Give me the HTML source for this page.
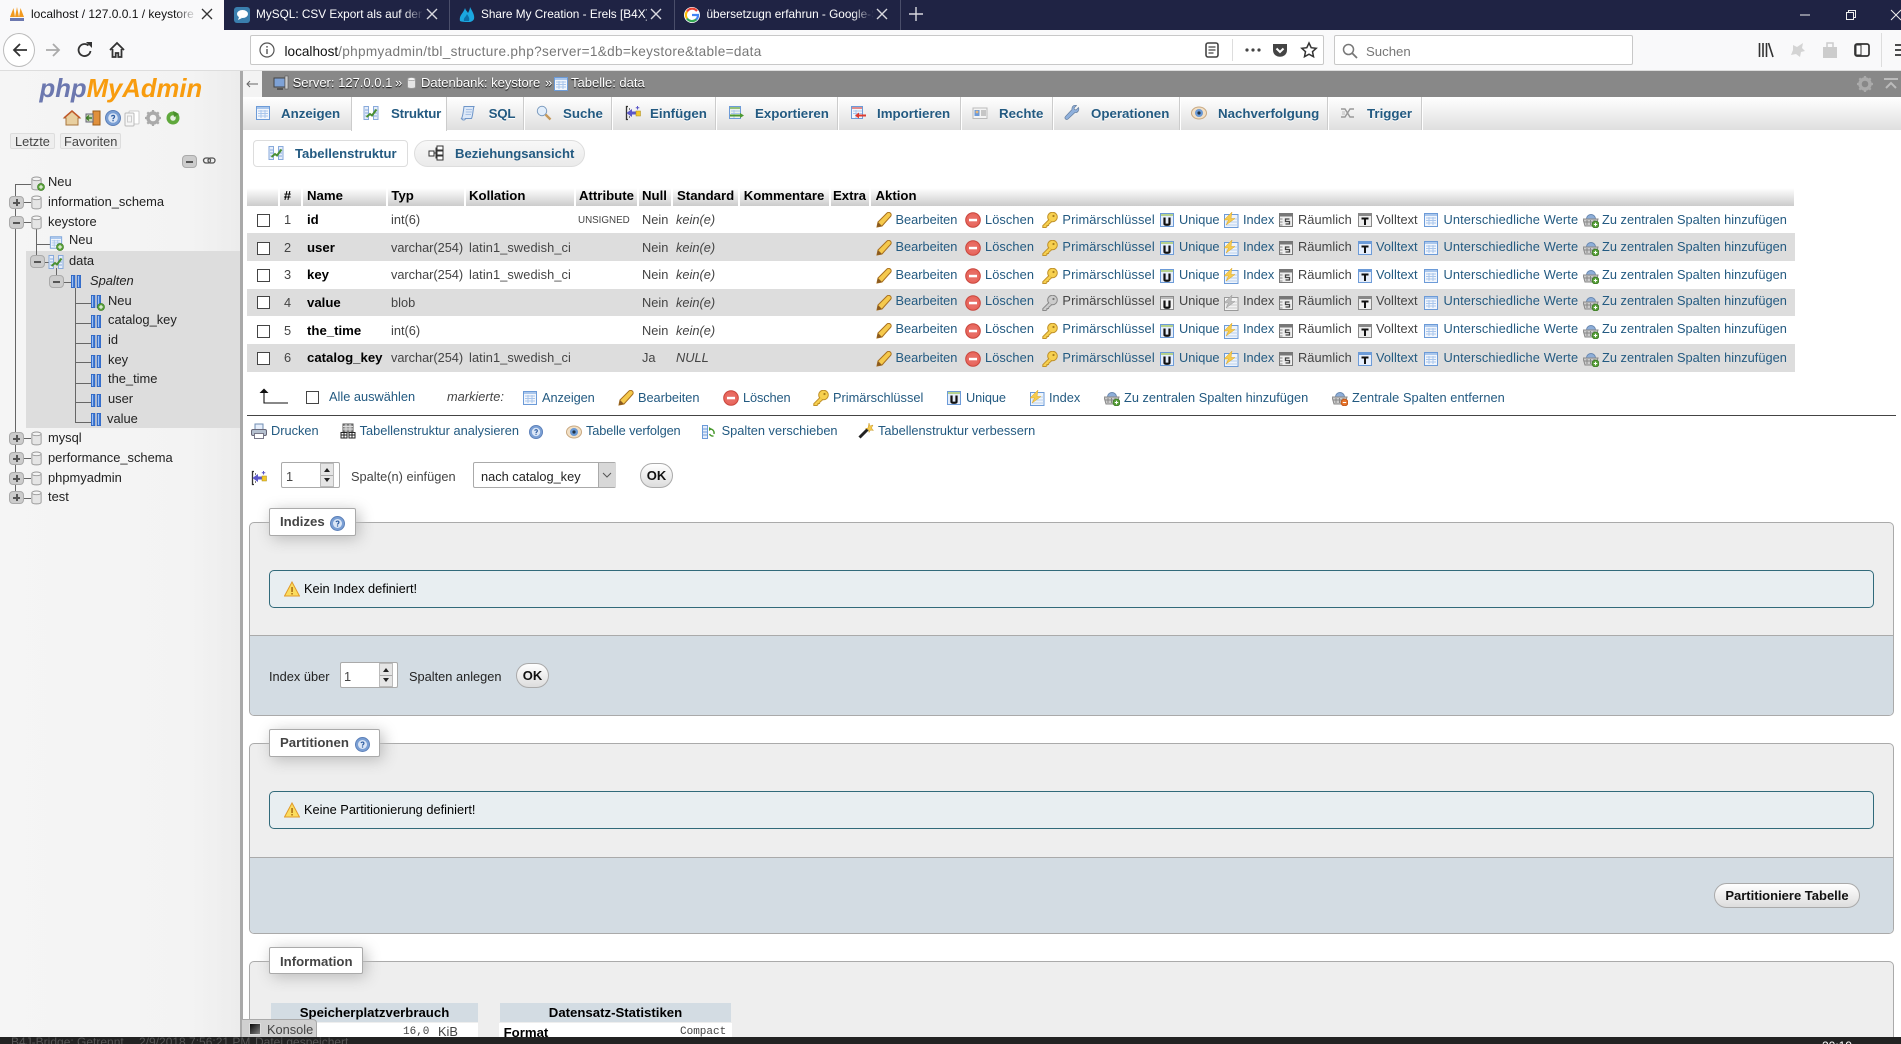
<!DOCTYPE html>
<html lang="de"><head><meta charset="utf-8"><title>phpMyAdmin</title>
<style>
html,body{margin:0;padding:0;width:1901px;height:1044px;overflow:hidden}
body{position:relative;background:#fff;font:12.8px "Liberation Sans",Arial,sans-serif;color:#444}
#pg{position:absolute;left:0;top:0;width:1901px;height:1044px;overflow:hidden}
.a,.t,svg{position:absolute}
.t{white-space:nowrap;line-height:16px}
svg{overflow:visible}
.i{width:16px;height:16px}
.l{color:#235a81}
.r{position:absolute;left:0;height:0;width:0}
.r .t{top:-8px}
.r .i{top:-8px}
.w{color:#fff;font-size:13px;text-shadow:0 1px 1px #000;top:75px}
.tb{font-weight:bold;font-size:13.3px;color:#235a81;top:106px;text-shadow:0 1px 0 #fff}
.sep{position:absolute;top:97px;height:33px;width:1px;background:#fff;box-shadow:-1px 0 0 #ccc}
.th{font-weight:bold;font-size:13.2px;color:#000;top:188px}
.hs{position:absolute;top:188px;height:18px;width:2px;background:#fff}
.n{left:307px;font-weight:bold;font-size:13.2px;color:#000}
.ck{position:absolute;left:257px;top:-6px;width:11px;height:11px;border:1px solid #444;background:#fff}
.b1{left:895.5px}.b2{left:985px;letter-spacing:.1px}.b3{left:1062.4px;letter-spacing:.14px}.b4{left:1179px}.b5{left:1243px}.b6{left:1298px;letter-spacing:.05px}.b7{left:1376px;letter-spacing:.05px}.b8{left:1443.5px;letter-spacing:.12px}.b9{left:1602px;letter-spacing:.02px}
.p1{left:876px}.p2{left:965px}.p3{left:1042px}.p4{left:1159px}.p5{left:1223px}.p6{left:1278px}.p7{left:1357px}.p8{left:1423px}.p9{left:1583px}
.k{left:469px;letter-spacing:.1px}
.tr{font-size:12.9px;color:#222}
.ln{position:absolute;background:#666}
.h{width:1px}.v{height:1px}
.pm{position:absolute;width:13px;height:11px;background:#ccc;border:1px solid #aaa;border-radius:4px}
.pm:before{content:"";position:absolute;left:3px;top:5px;width:7px;height:1px;background:#555;box-shadow:0 1px 0 #555}
.pm.pl:after{content:"";position:absolute;left:6px;top:2px;width:2px;height:7px;background:#555}
.fs{position:absolute;left:249px;width:1645px;background:#eee;border:1px solid #aaa;border-radius:5px;box-sizing:border-box}
.fo{position:absolute;left:250px;width:1643px;background:#d3dce3;border-top:1px solid #aaa;border-radius:0 0 4px 4px;box-sizing:border-box}
.lg{position:absolute;left:269px;background:#fff;border:1px solid #aaa;border-radius:2px;box-shadow:3px 3px 15px #bbb;box-sizing:border-box}
.lt{font-weight:bold;font-size:13.2px;color:#444}
.no{position:absolute;left:269px;width:1605px;height:38px;background:#e8eef1;border:1px solid #316a7a;border-radius:5px;box-sizing:border-box}
.nt{left:304px;color:#000;font-size:12.8px}
.in{position:absolute;background:#fff;border:1px solid #aaa;border-radius:2px;box-sizing:border-box}
.sp{position:absolute;width:14px;height:24px;background:#e5e5e5;border:1px solid #bbb;box-sizing:border-box}
.sp:before{content:"";position:absolute;left:3px;top:4px;border:3px solid transparent;border-bottom:4px solid #222;border-top:0}
.sp:after{content:"";position:absolute;left:3px;bottom:4px;border:3px solid transparent;border-top:4px solid #222;border-bottom:0}
.sp i{position:absolute;left:0;right:0;top:11px;height:1px;background:#aaa}
.btn{position:absolute;border:1px solid #aaa;border-radius:13px;background:linear-gradient(#fff,#ddd);box-sizing:border-box;text-align:center;font-weight:bold;color:#111;font-size:13px;line-height:24px}
.bt{color:#fff;font-size:11.8px;top:6px}
.x{stroke:#d8d8df;stroke-width:1.4;fill:none}
</style></head><body><div id="pg">
<svg width="0" height="0" style="left:0;top:0">
<defs>
<symbol id="pencil" viewBox="0 0 16 16"><path d="M1 15l1-5L11 1c1-.9 2.600-.7 3.500.2.900.9.900 2.300 0 3.300L6 14z" fill="#f5c94c" stroke="#a9701f"/><path d="M1 15l1-5 4 4z" fill="#8a5a20"/></symbol>
<symbol id="del" viewBox="0 0 16 16"><circle cx="8" cy="8" r="7.300" fill="#e8665c" stroke="#c8453c"/><circle cx="8" cy="8" r="5" fill="#e8706a" opacity=".7"/><rect x="4" y="6.800" width="8" height="2.500" fill="#fff"/></symbol>
<symbol id="key" viewBox="0 0 16 16"><circle cx="10.500" cy="5" r="4.800" fill="#f7d04f" stroke="#c0912a"/><path d="M7 7.500L.8 13.700v1.800h3.200l1-1v-1h1.500l.5-1.500 2.500-2" fill="#f7d04f" stroke="#c0912a"/><circle cx="11.500" cy="4" r="1.100" fill="#a97f1e"/></symbol>
<symbol id="keyg" viewBox="0 0 16 16"><circle cx="10.500" cy="5" r="4.800" fill="#ccc" stroke="#888"/><path d="M7 7.500L.8 13.700v1.800h3.200l1-1v-1h1.500l.5-1.500 2.500-2" fill="#ccc" stroke="#888"/><circle cx="11.500" cy="4" r="1.100" fill="#777"/></symbol>
<symbol id="u" viewBox="0 0 16 16"><rect x="1.500" y="1.500" width="13" height="13" fill="#e6eefb" stroke="#6c9bd8"/><rect x="2" y="2" width="12" height="2" fill="#b6d28f"/><path d="M5.500 5.500v6.500c0 1 5 1 5 0V5.500" fill="none" stroke="#111" stroke-width="2.200"/></symbol>
<symbol id="ug" viewBox="0 0 16 16"><rect x="1.500" y="1.500" width="13" height="13" fill="#f2f2f2" stroke="#888"/><rect x="2" y="2" width="12" height="2" fill="#bbb"/><path d="M5.500 5.500v6.500c0 1 5 1 5 0V5.500" fill="none" stroke="#111" stroke-width="2.200"/></symbol>
<symbol id="idx" viewBox="0 0 16 16"><rect x="1.500" y="2.500" width="13.500" height="13" fill="#eef4fb" stroke="#6c9bd8"/><path d="M3 7h12M3 10h12M3 13h12" stroke="#b9d0ee"/><path d="M9 0L1 8h4.500L3 13l9-6.500H8z" fill="#f6cb4c" stroke="#d8a52c" stroke-width=".5"/></symbol>
<symbol id="idxg" viewBox="0 0 16 16"><rect x="1.500" y="2.500" width="13.500" height="13" fill="#f2f2f2" stroke="#999"/><path d="M3 7h12M3 10h12M3 13h12" stroke="#ccc"/><path d="M9 0L1 8h4.500L3 13l9-6.500H8z" fill="#bbb" stroke="#999" stroke-width=".5"/></symbol>
<symbol id="spa" viewBox="0 0 16 16"><rect x="1.500" y="1.500" width="13" height="13" fill="#eee" stroke="#777"/><rect x="2" y="2" width="12" height="2.500" fill="#777"/><path d="M1.500 7h3M1.500 10h3M1.500 13h3" stroke="#888"/><path d="M11.500 7H7.500v2.500h4V12H7.500" fill="none" stroke="#444" stroke-width="1.300"/></symbol>
<symbol id="tt" viewBox="0 0 16 16"><rect x="1.500" y="1.500" width="13" height="13" fill="#eee" stroke="#888"/><rect x="2" y="2" width="12" height="2" fill="#888"/><path d="M4.500 6.500h7M8 6.500V13" stroke="#111" stroke-width="2"/></symbol>
<symbol id="tb" viewBox="0 0 16 16"><rect x="1.500" y="1.500" width="13" height="13" fill="#e6eefb" stroke="#6c9bd8"/><rect x="2" y="2" width="12" height="2" fill="#6c9bd8"/><path d="M4.500 6.500h7M8 6.500V13" stroke="#111" stroke-width="2"/></symbol>
<symbol id="dis" viewBox="0 0 16 16"><rect x="1.500" y="1.500" width="13" height="13" fill="#f2f6fc" stroke="#6c9bd8"/><rect x="2" y="2" width="12" height="2" fill="#a9c6ec"/><path d="M3 6h10M3 8.500h10M3 11h10M6 5v8M10 5v8" stroke="#a9c6ec"/></symbol>
<symbol id="bka" viewBox="0 0 16 16"><path d="M3.500 7a4.500 4.500 0 019 0z" fill="#8eaed8" stroke="#6787b0"/><path d="M0 7h15l-2 7H2z" fill="#ccc" stroke="#888"/><path d="M4 8v5M7.500 8v5M11 8v5M1 10h13" stroke="#888"/><circle cx="12.500" cy="12.500" r="3.400" fill="#5ca33c" stroke="#3d7d26"/><path d="M10.800 12.500h3.400M12.500 10.800v3.400" stroke="#fff"/></symbol>
<symbol id="bkr" viewBox="0 0 16 16"><path d="M3.500 7a4.500 4.500 0 019 0z" fill="#8eaed8" stroke="#6787b0"/><path d="M0 7h15l-2 7H2z" fill="#ccc" stroke="#888"/><path d="M4 8v5M7.500 8v5M11 8v5M1 10h13" stroke="#888"/><circle cx="12.500" cy="12.500" r="3.400" fill="#e8762c" stroke="#c0561a"/><path d="M10.800 12.500h3.400" stroke="#fff"/></symbol>
<symbol id="help" viewBox="0 0 16 16"><circle cx="8" cy="8" r="7.500" fill="#7a9fd4" stroke="#5b7fb8"/><circle cx="8" cy="8" r="4.800" fill="#dbe6f6"/><path d="M6.500 6.500C7 5 9.500 5 9.500 6.800 9.500 8 8 8 8 9.200" fill="none" stroke="#2d5ca0" stroke-width="1.300"/><rect x="7.400" y="10" width="1.300" height="1.300" fill="#2d5ca0"/></symbol>
<symbol id="eye" viewBox="0 0 16 16"><ellipse cx="8" cy="8" rx="7.500" ry="6" fill="#f2e0c6" stroke="#c8a880"/><circle cx="8" cy="8" r="4" fill="#6b9ad6"/><circle cx="8" cy="8" r="1.600" fill="#234"/></symbol>
<symbol id="print" viewBox="0 0 16 16"><rect x="4" y="1" width="8" height="6" fill="#e6eefb" stroke="#6f8cb2"/><rect x="0.500" y="6.500" width="15" height="6" rx="1.500" fill="#b5c0cf" stroke="#667"/><rect x="3.500" y="10.500" width="9" height="5" fill="#fff" stroke="#778"/></symbol>
<symbol id="ana" viewBox="0 0 16 16"><rect x="3" y="1" width="10" height="8" fill="#999" stroke="#555"/><path d="M3 3.500h10M3 6h10M6 1v8M10 1v8" stroke="#ddd"/><rect x="1" y="9.500" width="6" height="5.500" fill="#fff" stroke="#222"/><rect x="9" y="9.500" width="6" height="5.500" fill="#fff" stroke="#222"/><path d="M1 12h6M4 9.500V15M9 12h6M12 9.500V15" stroke="#222"/></symbol>
<symbol id="mov" viewBox="0 0 16 16"><rect x="1.500" y="1.500" width="5" height="13" fill="#e6eefb" stroke="#6c9bd8"/><path d="M2 5h4M2 8h4M2 11h4" stroke="#6c9bd8"/><path d="M9 5a4 4 0 014 5M12.500 12a4 4 0 01-4-2" fill="none" stroke="#4a9a30" stroke-width="1.400"/><path d="M8 3l3 2-3 2z" fill="#4a9a30"/></symbol>
<symbol id="wand" viewBox="0 0 16 16"><path d="M1.500 14.500L9.500 6.500" stroke="#222" stroke-width="3"/><path d="M11 0l1 3 3-1-1.500 3 2 2.500-3-.5-1.500 2.500-.5-3L7.500 5.500 10 5z" fill="#f5c94c" stroke="#c89a2a" stroke-width=".5"/></symbol>
<symbol id="warn" viewBox="0 0 16 16"><path d="M8 1l7.500 14H.5z" fill="#fbdc5e" stroke="#e09a2a"/><rect x="7.300" y="6" width="1.500" height="5" fill="#a86a10"/><rect x="7.300" y="12" width="1.500" height="1.500" fill="#a86a10"/></symbol>
<symbol id="st" viewBox="0 0 16 16"><rect x="1" y="1.500" width="4.500" height="13" fill="#e6eefb" stroke="#88aadb"/><rect x="10.500" y="1.500" width="4.500" height="13" fill="#e6eefb" stroke="#88aadb"/><path d="M2 5h3M2 8h3M2 11h3M11 5h3M11 8h3M11 11h3" stroke="#88aadb"/><path d="M3.500 12l3.500-3 2 1.500 4.500-6" fill="none" stroke="#4a8f32" stroke-width="2"/></symbol>
<symbol id="sql" viewBox="0 0 16 16"><path d="M4 1.500h10c-1 2-1 9-2.500 12H1.500c1.500-2 2-9 2.500-12z" fill="#dce8f8" stroke="#6e95c8"/><path d="M1.500 13.500c1 2 3.500 2 4 0" fill="#fff" stroke="#6e95c8"/><path d="M6 4.500h6M5.800 7h6M5.500 9.500h5.500" stroke="#a6c0e4"/></symbol>
<symbol id="mag" viewBox="0 0 16 16"><circle cx="6" cy="6" r="4.700" fill="#e2eefb" stroke="#7d9cbf"/><path d="M9.500 9.500l5 5" stroke="#c6995a" stroke-width="2.400"/></symbol>
<symbol id="ins" viewBox="0 0 16 16"><path d="M3 1.500H1.500v13H3M4 4h1M4 12h1" fill="none" stroke="#333" stroke-width="1.300"/><path d="M7 4v8L1.500 8z" fill="#5b57c8"/><rect x="7" y="6.500" width="4" height="3" fill="#5b57c8"/><rect x="11" y="6" width="4.500" height="5" fill="#f2c72b" stroke="#a98a1c" stroke-width=".5"/><path d="M12.500 1v3.500M10.800 2.800h3.500" stroke="#5b57c8"/></symbol>
<symbol id="exp" viewBox="0 0 16 16"><rect x="1.500" y="1.500" width="11" height="12" fill="#eaf2ea" stroke="#6c9bd8"/><rect x="2" y="2" width="10" height="2" fill="#93c078"/><path d="M3 6h9M3 8.500h9M6 5v8" stroke="#a9c6ec"/><rect x="2" y="9.500" width="10" height="2" fill="#4d9a30"/><path d="M12 8l4 2.500L12 13z" fill="#4d9a30"/></symbol>
<symbol id="imp" viewBox="0 0 16 16"><rect x="1.500" y="1.500" width="11" height="12" fill="#f2f6fc" stroke="#6c9bd8"/><rect x="2" y="2" width="10" height="2" fill="#e08d8d"/><path d="M3 6h9M3 8.500h9M6 5v8" stroke="#a9c6ec"/><rect x="8" y="9.500" width="8" height="2" fill="#dd3b30"/><path d="M9 7.500l-4 3 4 3z" fill="#dd3b30"/></symbol>
<symbol id="card" viewBox="0 0 16 16"><rect x="1" y="3" width="14" height="10.500" fill="#f4f4f4" stroke="#bbb"/><rect x="2.500" y="5" width="5" height="6" fill="#6d9ad8"/><circle cx="5" cy="7" r="1.400" fill="#e8b87a"/><path d="M9 6h5M9 8h5M9 10h5" stroke="#999"/></symbol>
<symbol id="wr" viewBox="0 0 16 16"><path d="M14.500 2.500l-2.500 2.500-1.500-.5-.5-1.500 2.500-2.500c-2.500-.8-5 1-4.500 4L1.500 11.500c-1.500 1.500.5 4 2.500 2.500L11 7.500c2.800.5 4.500-2.500 3.500-5z" fill="#8fb0dc" stroke="#667f9f" stroke-width=".7"/></symbol>
<symbol id="trg" viewBox="0 0 16 16"><path d="M1 4h4l5 8h4M1 12h4l5-8h4" fill="none" stroke="#999" stroke-width="1.400"/><path d="M2 7h3M2 9h3" stroke="#bbb"/></symbol>
<symbol id="db" viewBox="0 0 14 16"><path d="M2 3v10c0 2.500 10 2.500 10 0V3z" fill="#e5e5e5" stroke="#999"/><ellipse cx="7" cy="3" rx="5" ry="2" fill="#f5f5f5" stroke="#999"/></symbol>
<symbol id="plus" viewBox="0 0 8 8"><circle cx="4" cy="4" r="3.500" fill="#5ca33c" stroke="#3d7d26" stroke-width=".7"/><path d="M2 4h4M4 2v4" stroke="#fff"/></symbol>
<symbol id="col" viewBox="0 0 10 13"><rect x="0" y="0" width="4" height="13" fill="#3f79d6" stroke="#1c4ea8" stroke-width=".5"/><rect x="6" y="0" width="4" height="13" fill="#3f79d6" stroke="#1c4ea8" stroke-width=".5"/><rect x="1" y="1" width="1" height="11" fill="#9dc0f2"/><rect x="7" y="1" width="1" height="11" fill="#9dc0f2"/></symbol>
<symbol id="gear" viewBox="0 0 16 16"><circle cx="8" cy="8" r="5" fill="none" stroke="#aaa" stroke-width="3.400"/><path d="M8 0v3M8 13v3M0 8h3M13 8h3M2.300 2.300l2 2M11.700 11.700l2 2M13.700 2.300l-2 2M4.300 11.700l-2 2" stroke="#aaa" stroke-width="2.200"/></symbol>
</defs></svg>

<!-- Browser tab strip -->
<div class="a" style="left:0;top:0;width:1901px;height:30px;background:#1f2344"></div>
<div class="a" style="left:0;top:0;width:224px;height:30px;background:#f9f9fa"></div>
<div class="a" style="left:449px;top:0;width:1px;height:30px;background:#4a4e6a"></div>
<div class="a" style="left:674px;top:0;width:1px;height:30px;background:#4a4e6a"></div>
<div class="a" style="left:900px;top:0;width:1px;height:30px;background:#4a4e6a"></div>
<svg width="16" height="16" style="left:9px;top:6px" viewBox="0 0 16 16"><path d="M1 11L4.500 2l1.500 9zM6 11l2-10 2 10zM10 11L11.500 2 15 11z" fill="#f29a1f"/><rect x="1" y="12" width="14" height="3" fill="#6c78af"/></svg>
<div class="t" style="left:31px;top:6px;width:163px;overflow:hidden;font-size:12px;color:#111">localhost / 127.0.0.1 / keystore / data</div>
<div class="a" style="left:175px;top:4px;width:22px;height:22px;background:linear-gradient(to right,rgba(249,249,250,0),#f9f9fa)"></div>
<svg width="10" height="10" style="left:202px;top:9px"><path d="M0 0l10 10M10 0L0 10" stroke="#333" stroke-width="1.300"/></svg>
<svg width="16" height="16" style="left:234px;top:7px" viewBox="0 0 16 16"><rect width="16" height="16" rx="3" fill="#3a7fae"/><ellipse cx="8.500" cy="7" rx="5.500" ry="4" fill="#fff"/><path d="M5 10l-1 3 4-2z" fill="#fff"/></svg>
<div class="t bt" style="left:256px;width:166px;overflow:hidden">MySQL: CSV Export als auf dem Server</div>
<div class="a" style="left:404px;top:4px;width:20px;height:22px;background:linear-gradient(to right,rgba(31,35,68,0),#1f2344)"></div>
<svg width="10" height="10" style="left:427px;top:9px"><path class="x" d="M0 0l10 10M10 0L0 10"/></svg>
<svg width="16" height="16" style="left:459px;top:6px" viewBox="0 0 16 16"><path d="M1 15C0 9 4 8 6 2c1 3 2 3 3 5 1-2 2-4 2-6 2 4 5 8 4 12-1 2-3 3-5 3-3 0-7 0-9-1z" fill="#1ba7e0"/><path d="M5 15c-1-3 2-4 3-7 1 2 3 4 2 7z" fill="#0b6fa8"/></svg>
<div class="t bt" style="left:481px;width:166px;overflow:hidden">Share My Creation - Erels [B4X]</div>
<svg width="10" height="10" style="left:651px;top:9px"><path class="x" d="M0 0l10 10M10 0L0 10"/></svg>
<svg width="16" height="16" style="left:684px;top:7px" viewBox="0 0 16 16"><circle cx="8" cy="8" r="8" fill="#fff"/><path d="M13 4A6.200 6.200 0 0 0 3 4.500" fill="none" stroke="#ea4335" stroke-width="2.200"/><path d="M3 4.500a6.200 6.200 0 0 0 0 7" fill="none" stroke="#fbbc05" stroke-width="2.200"/><path d="M3 11.500a6.200 6.200 0 0 0 9.500.7" fill="none" stroke="#34a853" stroke-width="2.200"/><path d="M8 8h6a6 6 0 0 1-1.800 4.500" fill="none" stroke="#4285f4" stroke-width="2.200"/></svg>
<div class="t bt" style="left:706.500px;width:166px;overflow:hidden">übersetzugn erfahrun - Google-Suche</div>
<div class="a" style="left:852px;top:4px;width:22px;height:22px;background:linear-gradient(to right,rgba(31,35,68,0),#1f2344)"></div>
<svg width="10" height="10" style="left:877px;top:9px"><path class="x" d="M0 0l10 10M10 0L0 10"/></svg>
<svg width="14" height="14" style="left:909px;top:7px"><path d="M7 0v14M0 7h14" stroke="#d8d8df" stroke-width="1.400"/></svg>
<svg width="10" height="2" style="left:1800px;top:14px"><path d="M0 1h10" stroke="#eee"/></svg>
<svg width="10" height="10" style="left:1846px;top:10px"><rect x=".5" y="2.500" width="7" height="7" fill="none" stroke="#eee"/><path d="M2.500 2.500v-2h7v7h-2" fill="none" stroke="#eee"/></svg>
<svg width="10" height="10" style="left:1891px;top:10px"><path d="M0 0l10 10M10 0L0 10" stroke="#eee"/></svg>

<!-- Toolbar -->
<div class="a" style="left:0;top:30px;width:1901px;height:41px;background:#f9f9fa;border-bottom:1px solid #ddd;box-sizing:border-box"></div>
<div class="a" style="left:3px;top:33px;width:32px;height:34px;border-radius:50%;border:1px solid #bbb;background:#fff;box-sizing:border-box"></div>
<svg width="16" height="16" style="left:12px;top:42px"><path d="M15 8H2M8 2L2 8l6 6" fill="none" stroke="#333" stroke-width="1.800"/></svg>
<svg width="16" height="16" style="left:45px;top:42px"><path d="M1 8h13M8 2l6 6-6 6" fill="none" stroke="#aaa" stroke-width="1.800"/></svg>
<svg width="16" height="16" style="left:77px;top:42px"><path d="M13.500 9A6 6 0 1 1 11.500 3.500" fill="none" stroke="#333" stroke-width="1.800"/><path d="M9 0h6v6z" fill="#333"/></svg>
<svg width="16" height="16" style="left:109px;top:42px"><path d="M1 8l7-7 7 7M3.500 7v8h3.200v-4h2.600v4h3.200V7" fill="none" stroke="#333" stroke-width="1.800"/></svg>
<div class="a" style="left:250px;top:35px;width:1074px;height:30px;background:#fff;border:1px solid #c8c8c8;border-radius:2px;box-sizing:border-box"></div>
<svg width="16" height="16" style="left:259px;top:42px"><circle cx="8" cy="8" r="7" fill="none" stroke="#555" stroke-width="1.200"/><path d="M8 7v5M8 4v1.600" stroke="#555" stroke-width="1.400"/></svg>
<div class="t" style="left:284.500px;top:44px;font-size:13.6px;color:#777;line-height:16px;letter-spacing:.32px"><span style="color:#111;letter-spacing:0">localhost</span>/phpmyadmin/tbl_structure.php?server=1&amp;db=keystore&amp;table=data</div>
<svg width="14" height="16" style="left:1205px;top:42px"><rect x="1" y="1" width="12" height="14" rx="2" fill="none" stroke="#444" stroke-width="1.600"/><path d="M3.500 5h7M3.500 8h7M3.500 11h5" stroke="#444" stroke-width="1.300"/></svg>
<div class="a" style="left:1232px;top:39px;width:1px;height:22px;background:#ddd"></div>
<svg width="16" height="4" style="left:1245px;top:48px"><circle cx="2" cy="2" r="1.600" fill="#444"/><circle cx="8" cy="2" r="1.600" fill="#444"/><circle cx="14" cy="2" r="1.600" fill="#444"/></svg>
<svg width="16" height="16" style="left:1272px;top:42px"><path d="M1 2h14v6c0 9-14 9-14 0z" fill="#444"/><path d="M4.500 6.500L8 10l3.500-3.500" fill="none" stroke="#fff" stroke-width="2"/></svg>
<svg width="16" height="16" style="left:1301px;top:42px"><path d="M8 1l2.200 4.700 5 .6-3.700 3.400 1 5L8 12.200 3.500 14.700l1-5L.8 6.300l5-.6z" fill="none" stroke="#333" stroke-width="1.500"/></svg>
<div class="a" style="left:1334px;top:35px;width:299px;height:30px;background:#fff;border:1px solid #c8c8c8;border-radius:2px;box-sizing:border-box"></div>
<svg width="16" height="16" style="left:1342px;top:43px"><circle cx="6.500" cy="6.500" r="5" fill="none" stroke="#777" stroke-width="1.500"/><path d="M10 10l5 5" stroke="#777" stroke-width="1.800"/></svg>
<div class="t" style="left:1366px;top:44px;font-size:13.2px;color:#777">Suchen</div>
<svg width="16" height="16" style="left:1758px;top:42px"><path d="M1.500 1v14M5 1v14M8.500 1v14M10.500 1l4.500 14" stroke="#333" stroke-width="1.600"/></svg>
<svg width="16" height="16" style="left:1790px;top:42px"><path d="M3 3l4 2 6-4-1 5 3 3-4 1-1 5-4-3-5 1 2-5z" fill="#d4d4d4"/></svg>
<svg width="16" height="16" style="left:1822px;top:42px"><path d="M1 5h14v11H1z" fill="#ccc"/><path d="M5 5V1h6v4" fill="none" stroke="#ccc" stroke-width="1.500"/></svg>
<svg width="16" height="16" style="left:1854px;top:42px"><rect x="1" y="2" width="14" height="12" rx="2" fill="none" stroke="#333" stroke-width="1.700"/><rect x="2" y="3" width="5" height="10" fill="#fff" stroke="#333"/></svg>
<div class="a" style="left:1881px;top:33px;width:1px;height:34px;background:#ddd"></div>
<svg width="14" height="14" style="left:1895px;top:43px"><path d="M0 2h14M0 7h14M0 12h14" stroke="#333" stroke-width="1.700"/></svg>

<!-- Sidebar -->
<div class="a" style="left:0;top:71px;width:240px;height:966px;background:linear-gradient(to right,#f5f5f5,#f3f3f3 80%,#ececec)"></div>
<div class="a" style="left:240px;top:71px;width:3px;height:966px;background:#a9a9a9"></div>
<div class="t" style="left:39.500px;top:73px;font:italic bold 25.700px/32px 'Liberation Sans',sans-serif;color:#6c78af"><span>php</span><span style="color:#f89c0e">MyAdmin</span></div>
<svg width="16" height="16" style="left:64px;top:110px" viewBox="0 0 16 16"><path d="M0 8l8-7 8 7-2 0v7H2V8z" fill="#e8cfa0" stroke="#a8743c"/><path d="M0 8l8-7 8 7" fill="none" stroke="#c0592a" stroke-width="1.500"/></svg>
<svg width="16" height="16" style="left:84.500px;top:110px" viewBox="0 0 16 16"><rect x="8" y="1" width="7" height="14" fill="#e0903c" stroke="#9a5c18"/><rect x="1" y="4" width="7" height="8" fill="#cdd6bb" stroke="#667"/><path d="M1 8h6M4 5.500L1.500 8 4 10.500" fill="none" stroke="#3d7d26" stroke-width="1.400"/></svg>
<svg class="i" style="left:104.500px;top:110px"><use href="#help"/></svg>
<svg width="16" height="16" style="left:124px;top:110px" viewBox="0 0 16 16"><rect x="5" y="1" width="10" height="13" rx="1" fill="#fff" stroke="#ccc"/><rect x="1" y="3" width="9" height="13" rx="1" fill="#f6f6f6" stroke="#bbb"/><rect x="3.500" y="6" width="4" height="6" fill="none" stroke="#ccc"/></svg>
<svg class="i" style="left:145px;top:110px"><use href="#gear"/></svg>
<svg width="14" height="16" style="left:166px;top:110px" viewBox="0 0 14 16"><circle cx="7" cy="8" r="6.500" fill="#5fa83c"/><circle cx="7" cy="8" r="2.800" fill="#e6eee0"/><path d="M7 1l6 3-5 3z" fill="#4a8f2c"/></svg>
<div class="a" style="left:10px;top:133px;width:45px;height:16px;background:#eee;border:1px solid #ddd;border-radius:2px;box-sizing:border-box"></div>
<div class="a" style="left:60px;top:133px;width:61px;height:16px;background:#eee;border:1px solid #ddd;border-radius:2px;box-sizing:border-box"></div>
<div class="t" style="left:15px;top:134px;color:#444">Letzte</div>
<div class="t" style="left:64px;top:134px;color:#444">Favoriten</div>
<div class="pm" style="left:182px;top:155px"></div>
<svg width="13" height="8" style="left:203px;top:157px"><rect x=".5" y="1" width="7" height="5" rx="2.500" fill="none" stroke="#555" stroke-width="1.300"/><rect x="5" y="1" width="7" height="5" rx="2.500" fill="none" stroke="#555" stroke-width="1.300"/></svg>

<!-- Tree -->
<div class="a" style="left:26px;top:251px;width:214px;height:177px;background:#ddd"></div>
<div class="ln h" style="left:15px;top:184px;height:314px"></div>
<div class="ln v" style="left:15px;top:184px;width:16px"></div>
<div class="ln v" style="left:15px;top:202px;width:16px"></div>
<div class="ln v" style="left:15px;top:222px;width:16px"></div>
<div class="ln v" style="left:15px;top:438px;width:16px"></div>
<div class="ln v" style="left:15px;top:458px;width:16px"></div>
<div class="ln v" style="left:15px;top:478px;width:16px"></div>
<div class="ln v" style="left:15px;top:498px;width:16px"></div>
<div class="ln h" style="left:36px;top:226px;height:36px"></div>
<div class="ln v" style="left:36px;top:244px;width:14px"></div>
<div class="ln v" style="left:36px;top:262px;width:13px"></div>
<div class="ln h" style="left:56px;top:268px;height:14px"></div>
<div class="ln v" style="left:56px;top:282px;width:15px"></div>
<div class="ln h" style="left:75px;top:288px;height:134px"></div>
<div class="ln v" style="left:75px;top:303px;width:16px"></div>
<div class="ln v" style="left:75px;top:323px;width:16px"></div>
<div class="ln v" style="left:75px;top:343px;width:16px"></div>
<div class="ln v" style="left:75px;top:362px;width:16px"></div>
<div class="ln v" style="left:75px;top:383px;width:16px"></div>
<div class="ln v" style="left:75px;top:402px;width:16px"></div>
<div class="ln v" style="left:75px;top:422px;width:16px"></div>
<svg width="13" height="15" style="left:30px;top:176px"><use href="#db"/></svg><svg width="8" height="8" style="left:37px;top:183px"><use href="#plus"/></svg>
<div class="t tr" style="left:48px;top:174px">Neu</div>
<div class="pm pl" style="left:9px;top:196px"></div><svg width="13" height="15" style="left:30px;top:195px"><use href="#db"/></svg>
<div class="t tr" style="left:48px;top:194px">information_schema</div>
<div class="pm" style="left:9px;top:216px"></div><svg width="13" height="15" style="left:30px;top:215px"><use href="#db"/></svg>
<div class="t tr" style="left:48px;top:214px">keystore</div>
<svg width="14" height="15" style="left:49px;top:235px"><use href="#dis"/></svg><svg width="8" height="8" style="left:56px;top:243px"><use href="#plus"/></svg>
<div class="t tr" style="left:69px;top:232px">Neu</div>
<div class="pm" style="left:30px;top:255px"></div><svg class="i" style="left:48px;top:254px"><use href="#st"/></svg>
<div class="t tr" style="left:69px;top:253px">data</div>
<div class="pm" style="left:49px;top:275px"></div><svg width="10" height="13" style="left:71px;top:275px"><use href="#col"/></svg>
<div class="t tr" style="left:90px;top:273px;font-style:italic">Spalten</div>
<svg width="10" height="13" style="left:91px;top:295px"><use href="#col"/></svg><svg width="8" height="8" style="left:97px;top:303px"><use href="#plus"/></svg>
<div class="t tr" style="left:108px;top:293px">Neu</div>
<svg width="10" height="13" style="left:91px;top:315px"><use href="#col"/></svg><div class="t tr" style="left:108px;top:312px">catalog_key</div>
<svg width="10" height="13" style="left:91px;top:335px"><use href="#col"/></svg><div class="t tr" style="left:108px;top:332px">id</div>
<svg width="10" height="13" style="left:91px;top:355px"><use href="#col"/></svg><div class="t tr" style="left:108px;top:352px">key</div>
<svg width="10" height="13" style="left:91px;top:374px"><use href="#col"/></svg><div class="t tr" style="left:108px;top:371px">the_time</div>
<svg width="10" height="13" style="left:91px;top:394px"><use href="#col"/></svg><div class="t tr" style="left:108px;top:391px">user</div>
<svg width="10" height="13" style="left:91px;top:413px"><use href="#col"/></svg><div class="t tr" style="left:107px;top:411px">value</div>
<div class="pm pl" style="left:9px;top:432px"></div><svg width="13" height="15" style="left:30px;top:431px"><use href="#db"/></svg><div class="t tr" style="left:48px;top:430px">mysql</div>
<div class="pm pl" style="left:9px;top:452px"></div><svg width="13" height="15" style="left:30px;top:451px"><use href="#db"/></svg><div class="t tr" style="left:48px;top:450px">performance_schema</div>
<div class="pm pl" style="left:9px;top:472px"></div><svg width="13" height="15" style="left:30px;top:471px"><use href="#db"/></svg><div class="t tr" style="left:48px;top:470px">phpmyadmin</div>
<div class="pm pl" style="left:9px;top:491px"></div><svg width="13" height="15" style="left:30px;top:490px"><use href="#db"/></svg><div class="t tr" style="left:48px;top:489px">test</div>

<!-- Breadcrumb -->
<div class="a" style="left:243px;top:71px;width:1658px;height:26px;background:#888"></div>
<div class="a" style="left:243px;top:71px;width:19px;height:26px;background:#f3f3f3"></div>
<svg width="12" height="8" style="left:246px;top:80px"><path d="M12 4H1M4 1L1 4l3 3" fill="none" stroke="#666"/></svg>
<svg width="16" height="16" style="left:273px;top:75px" viewBox="0 0 16 16"><rect x="1" y="3" width="11" height="9" fill="#7ea2d6" stroke="#444"/><rect x="12" y="1" width="3" height="13" fill="#ccc" stroke="#555" stroke-width=".6"/><rect x="4" y="13" width="6" height="2" fill="#555"/></svg>
<div class="t w" style="left:292.600px">Server: 127.0.0.1</div>
<div class="t w" style="left:395px">»</div>
<svg width="11" height="14" style="left:406px;top:76px"><use href="#db"/></svg>
<div class="t w" style="left:421px">Datenbank: keystore</div>
<div class="t w" style="left:545px">»</div>
<svg class="i" style="left:553px;top:76px"><use href="#dis"/></svg>
<div class="t w" style="left:571px">Tabelle: data</div>
<svg class="i" style="left:1857px;top:76px"><use href="#gear"/></svg>
<svg width="14" height="12" style="left:1884px;top:78px"><path d="M0 1h14M2 10l5-5 5 5" fill="none" stroke="#bbb" stroke-width="2"/></svg>

<!-- Main tabs -->
<div class="a" style="left:243px;top:97px;width:1658px;height:33px;background:linear-gradient(#fff,#dfdfdf)"></div>
<div class="a" style="left:351px;top:97px;width:96px;height:34px;background:#fff;border-left:1px solid #ccc;border-right:1px solid #ccc;box-sizing:border-box"></div>
<div class="sep" style="left:524px"></div><div class="sep" style="left:612px"></div><div class="sep" style="left:716px"></div><div class="sep" style="left:838px"></div><div class="sep" style="left:961px"></div><div class="sep" style="left:1053px"></div><div class="sep" style="left:1180px"></div><div class="sep" style="left:1328px"></div><div class="sep" style="left:1422px"></div>
<svg class="i" style="left:255px;top:105px"><use href="#dis"/></svg><div class="t tb" style="left:281px">Anzeigen</div>
<svg class="i" style="left:363px;top:105px"><use href="#st"/></svg><div class="t tb" style="left:391px;letter-spacing:-.2px">Struktur</div>
<svg class="i" style="left:460px;top:105px"><use href="#sql"/></svg><div class="t tb" style="left:488.600px;letter-spacing:-.2px">SQL</div>
<svg class="i" style="left:536px;top:105px"><use href="#mag"/></svg><div class="t tb" style="left:563px">Suche</div>
<svg class="i" style="left:625px;top:105px"><use href="#ins"/></svg><div class="t tb" style="left:650px">Einfügen</div>
<svg class="i" style="left:728px;top:105px"><use href="#exp"/></svg><div class="t tb" style="left:755px">Exportieren</div>
<svg class="i" style="left:850px;top:105px"><use href="#imp"/></svg><div class="t tb" style="left:877px">Importieren</div>
<svg class="i" style="left:972px;top:105px"><use href="#card"/></svg><div class="t tb" style="left:999px">Rechte</div>
<svg class="i" style="left:1064px;top:105px"><use href="#wr"/></svg><div class="t tb" style="left:1091px">Operationen</div>
<svg class="i" style="left:1191px;top:105px"><use href="#eye"/></svg><div class="t tb" style="left:1218px">Nachverfolgung</div>
<svg class="i" style="left:1340px;top:105px"><use href="#trg"/></svg><div class="t tb" style="left:1367px">Trigger</div>

<!-- Sub tabs -->
<div class="a" style="left:253px;top:140px;width:155px;height:27px;background:#fff;border:1px solid #ddd;border-radius:4px;box-sizing:border-box"></div>
<div class="a" style="left:414px;top:140px;width:171px;height:27px;background:linear-gradient(#f8f8f8,#eaeaea);border:1px solid #ddd;border-radius:14px;box-sizing:border-box"></div>
<svg class="i" style="left:268px;top:145px"><use href="#st"/></svg><div class="t l" style="left:295px;top:146px;font-weight:bold;font-size:13.100px">Tabellenstruktur</div>
<svg class="i" style="left:428px;top:145px" viewBox="0 0 16 16"><rect x="1" y="6" width="5" height="5" fill="#fff" stroke="#333"/><rect x="9" y="1" width="6" height="4" fill="#fff" stroke="#333"/><rect x="9" y="6" width="6" height="4" fill="#fff" stroke="#333"/><rect x="9" y="11" width="6" height="4" fill="#fff" stroke="#333"/><path d="M6 8h2V3h1M8 8h1M8 8v5h1" fill="none" stroke="#333"/></svg><div class="t l" style="left:455px;top:146px;font-weight:bold;font-size:13.100px">Beziehungsansicht</div>

<!-- Table -->
<div class="a" style="left:247px;top:188px;width:1547px;height:18px;background:linear-gradient(#fff,#ccc)"></div>
<div class="hs" style="left:278px"></div><div class="hs" style="left:301px"></div><div class="hs" style="left:386px"></div><div class="hs" style="left:464px"></div><div class="hs" style="left:574px"></div><div class="hs" style="left:637px"></div><div class="hs" style="left:671px"></div><div class="hs" style="left:738px"></div><div class="hs" style="left:829px"></div><div class="hs" style="left:869px"></div>
<div class="t th" style="left:283.700px">#</div><div class="t th" style="left:307px">Name</div><div class="t th" style="left:391.400px">Typ</div><div class="t th" style="left:469px">Kollation</div><div class="t th" style="left:579px">Attribute</div><div class="t th" style="left:642px">Null</div><div class="t th" style="left:677px">Standard</div><div class="t th" style="left:743.700px">Kommentare</div><div class="t th" style="left:833px">Extra</div><div class="t th" style="left:875.500px">Aktion</div>
<div class="a" style="left:247px;top:233px;width:1548px;height:28px;background:#ddd"></div>
<div class="a" style="left:247px;top:289px;width:1548px;height:27px;background:#ddd"></div>
<div class="a" style="left:247px;top:344px;width:1548px;height:28px;background:#ddd"></div>

<div class="r" style="top:220px"><div class="ck"></div><div class="t" style="left:284px">1</div><div class="t n">id</div><div class="t" style="left:391px">int(6)</div><div class="t" style="left:578px;font-size:9.800px;top:-7px">UNSIGNED</div><div class="t" style="left:642px">Nein</div><div class="t" style="left:676px;font-style:italic">kein(e)</div>
<div class="t l b1">Bearbeiten</div><div class="t l b2">Löschen</div><div class="t l b3">Primärschlüssel</div><div class="t l b4">Unique</div><div class="t l b5">Index</div><div class="t b6">Räumlich</div><div class="t b7">Volltext</div><div class="t l b8">Unterschiedliche Werte</div><div class="t l b9">Zu zentralen Spalten hinzufügen</div></div>
<div class="r" style="top:220px"><svg class="i p1"><use href="#pencil"/></svg><svg class="i p2"><use href="#del"/></svg><svg class="i p3"><use href="#key"/></svg><svg class="i p4"><use href="#u"/></svg><svg class="i p5"><use href="#idx"/></svg><svg class="i p6"><use href="#spa"/></svg><svg class="i p7"><use href="#tt"/></svg><svg class="i p8"><use href="#dis"/></svg><svg class="i p9"><use href="#bka"/></svg></div>

<div class="r" style="top:247.700px"><div class="ck"></div><div class="t" style="left:284px">2</div><div class="t n">user</div><div class="t" style="left:391px;letter-spacing:-.04px">varchar(254)</div><div class="t k">latin1_swedish_ci</div><div class="t" style="left:642px">Nein</div><div class="t" style="left:676px;font-style:italic">kein(e)</div></div>
<div class="r" style="top:247px"><div class="t l b1">Bearbeiten</div><div class="t l b2">Löschen</div><div class="t l b3">Primärschlüssel</div><div class="t l b4">Unique</div><div class="t l b5">Index</div><div class="t b6">Räumlich</div><div class="t l b7">Volltext</div><div class="t l b8">Unterschiedliche Werte</div><div class="t l b9">Zu zentralen Spalten hinzufügen</div></div>
<div class="r" style="top:248px"><svg class="i p1"><use href="#pencil"/></svg><svg class="i p2"><use href="#del"/></svg><svg class="i p3"><use href="#key"/></svg><svg class="i p4"><use href="#u"/></svg><svg class="i p5"><use href="#idx"/></svg><svg class="i p6"><use href="#spa"/></svg><svg class="i p7"><use href="#tb"/></svg><svg class="i p8"><use href="#dis"/></svg><svg class="i p9"><use href="#bka"/></svg></div>

<div class="r" style="top:274.700px"><div class="ck"></div><div class="t" style="left:284px">3</div><div class="t n">key</div><div class="t" style="left:391px;letter-spacing:-.04px">varchar(254)</div><div class="t k">latin1_swedish_ci</div><div class="t" style="left:642px">Nein</div><div class="t" style="left:676px;font-style:italic">kein(e)</div>
<div class="t l b1">Bearbeiten</div><div class="t l b2">Löschen</div><div class="t l b3">Primärschlüssel</div><div class="t l b4">Unique</div><div class="t l b5">Index</div><div class="t b6">Räumlich</div><div class="t l b7">Volltext</div><div class="t l b8">Unterschiedliche Werte</div><div class="t l b9">Zu zentralen Spalten hinzufügen</div></div>
<div class="r" style="top:275.500px"><svg class="i p1"><use href="#pencil"/></svg><svg class="i p2"><use href="#del"/></svg><svg class="i p3"><use href="#key"/></svg><svg class="i p4"><use href="#u"/></svg><svg class="i p5"><use href="#idx"/></svg><svg class="i p6"><use href="#spa"/></svg><svg class="i p7"><use href="#tb"/></svg><svg class="i p8"><use href="#dis"/></svg><svg class="i p9"><use href="#bka"/></svg></div>

<div class="r" style="top:303px"><div class="ck" style="top:-7px"></div><div class="t" style="left:284px">4</div><div class="t n">value</div><div class="t" style="left:391px">blob</div><div class="t" style="left:642px">Nein</div><div class="t" style="left:676px;font-style:italic">kein(e)</div></div>
<div class="r" style="top:301px"><div class="t l b1">Bearbeiten</div><div class="t l b2">Löschen</div><div class="t b3">Primärschlüssel</div><div class="t b4">Unique</div><div class="t b5">Index</div><div class="t b6">Räumlich</div><div class="t b7">Volltext</div><div class="t l b8">Unterschiedliche Werte</div><div class="t l b9">Zu zentralen Spalten hinzufügen</div></div>
<div class="r" style="top:303px"><svg class="i p1"><use href="#pencil"/></svg><svg class="i p2"><use href="#del"/></svg><svg class="i p3"><use href="#keyg"/></svg><svg class="i p4"><use href="#ug"/></svg><svg class="i p5"><use href="#idxg"/></svg><svg class="i p6"><use href="#spa"/></svg><svg class="i p7"><use href="#tt"/></svg><svg class="i p8"><use href="#dis"/></svg><svg class="i p9"><use href="#bka"/></svg></div>

<div class="r" style="top:330.700px"><div class="ck"></div><div class="t" style="left:284px">5</div><div class="t n">the_time</div><div class="t" style="left:391px">int(6)</div><div class="t" style="left:642px">Nein</div><div class="t" style="left:676px;font-style:italic">kein(e)</div></div>
<div class="r" style="top:329px"><div class="t l b1">Bearbeiten</div><div class="t l b2">Löschen</div><div class="t l b3">Primärschlüssel</div><div class="t l b4">Unique</div><div class="t l b5">Index</div><div class="t b6">Räumlich</div><div class="t b7">Volltext</div><div class="t l b8">Unterschiedliche Werte</div><div class="t l b9">Zu zentralen Spalten hinzufügen</div></div>
<div class="r" style="top:331px"><svg class="i p1"><use href="#pencil"/></svg><svg class="i p2"><use href="#del"/></svg><svg class="i p3"><use href="#key"/></svg><svg class="i p4"><use href="#u"/></svg><svg class="i p5"><use href="#idx"/></svg><svg class="i p6"><use href="#spa"/></svg><svg class="i p7"><use href="#tt"/></svg><svg class="i p8"><use href="#dis"/></svg><svg class="i p9"><use href="#bka"/></svg></div>

<div class="r" style="top:357.500px"><div class="ck"></div><div class="t" style="left:284px">6</div><div class="t n">catalog_key</div><div class="t" style="left:391px;letter-spacing:-.04px">varchar(254)</div><div class="t k">latin1_swedish_ci</div><div class="t" style="left:642px">Ja</div><div class="t" style="left:676px;font-style:italic">NULL</div>
<div class="t l b1">Bearbeiten</div><div class="t l b2">Löschen</div><div class="t l b3">Primärschlüssel</div><div class="t l b4">Unique</div><div class="t l b5">Index</div><div class="t b6">Räumlich</div><div class="t l b7">Volltext</div><div class="t l b8">Unterschiedliche Werte</div><div class="t l b9">Zu zentralen Spalten hinzufügen</div></div>
<div class="r" style="top:358.500px"><svg class="i p1"><use href="#pencil"/></svg><svg class="i p2"><use href="#del"/></svg><svg class="i p3"><use href="#key"/></svg><svg class="i p4"><use href="#u"/></svg><svg class="i p5"><use href="#idx"/></svg><svg class="i p6"><use href="#spa"/></svg><svg class="i p7"><use href="#tb"/></svg><svg class="i p8"><use href="#dis"/></svg><svg class="i p9"><use href="#bka"/></svg></div>

<!-- With selected -->
<svg width="29" height="16" style="left:259px;top:388px"><path d="M5 3v12h24" fill="none" stroke="#111" stroke-width="1.100"/><path d="M0.500 5L5 .5 9.500 5z" fill="#111"/></svg>
<div class="a" style="left:306px;top:391px;width:11px;height:11px;border:1px solid #444;background:#fff"></div>
<div class="t l" style="left:329px;top:389px">Alle auswählen</div>
<div class="t" style="left:447px;top:389px;font-style:italic">markierte:</div>
<svg class="i" style="left:522px;top:390px"><use href="#dis"/></svg><div class="t l" style="left:542px;top:390px;letter-spacing:-.08px">Anzeigen</div>
<svg class="i" style="left:618px;top:390px"><use href="#pencil"/></svg><div class="t l" style="left:638px;top:390px;letter-spacing:-.05px">Bearbeiten</div>
<svg class="i" style="left:723px;top:390px"><use href="#del"/></svg><div class="t l" style="left:743px;top:390px;letter-spacing:-.12px">Löschen</div>
<svg class="i" style="left:813px;top:390px"><use href="#key"/></svg><div class="t l" style="left:833px;top:390px">Primärschlüssel</div>
<svg class="i" style="left:946px;top:390px"><use href="#u"/></svg><div class="t l" style="left:966px;top:390px;letter-spacing:-.1px">Unique</div>
<svg class="i" style="left:1029px;top:390px"><use href="#idx"/></svg><div class="t l" style="left:1049px;top:390px">Index</div>
<svg class="i" style="left:1104px;top:390px"><use href="#bka"/></svg><div class="t l" style="left:1124px;top:390px">Zu zentralen Spalten hinzufügen</div>
<svg class="i" style="left:1332px;top:390px"><use href="#bkr"/></svg><div class="t l" style="left:1352px;top:390px;letter-spacing:.05px">Zentrale Spalten entfernen</div>
<div class="a" style="left:247px;top:415px;width:1649px;height:1px;background:#444"></div>

<svg class="i" style="left:251px;top:423px"><use href="#print"/></svg><div class="t l" style="left:271px;top:423px">Drucken</div>
<svg class="i" style="left:340px;top:423px"><use href="#ana"/></svg><div class="t l" style="left:359.600px;top:423px">Tabellenstruktur analysieren</div>
<svg width="14" height="14" style="left:529px;top:425px"><use href="#help"/></svg>
<svg class="i" style="left:566px;top:424px"><use href="#eye"/></svg><div class="t l" style="left:586px;top:423px;letter-spacing:-.13px">Tabelle verfolgen</div>
<svg class="i" style="left:701px;top:424px"><use href="#mov"/></svg><div class="t l" style="left:721.600px;top:423px">Spalten verschieben</div>
<svg class="i" style="left:858px;top:423px"><use href="#wand"/></svg><div class="t l" style="left:878px;top:423px">Tabellenstruktur verbessern</div>

<!-- Add columns -->
<svg class="i" style="left:251px;top:470px"><use href="#ins"/></svg>
<div class="in" style="left:281px;top:462px;width:59px;height:26px"></div>
<div class="t" style="left:286px;top:469px">1</div>
<div class="sp" style="left:320px;top:463px"><i></i></div>
<div class="t" style="left:351px;top:469px">Spalte(n) einfügen</div>
<div class="in" style="left:473px;top:462px;width:143px;height:26px"></div>
<div class="a" style="left:598px;top:463px;width:17px;height:24px;background:#d8d8d8;border-left:1px solid #aaa"></div>
<svg width="8" height="5" style="left:603px;top:473px"><path d="M0 0l4 4 4-4" fill="none" stroke="#555"/></svg>
<div class="t" style="left:481px;top:469px;color:#222">nach catalog_key</div>
<div class="btn" style="left:640px;top:463px;width:33px;height:25px">OK</div>

<!-- Indizes -->
<div class="fs" style="top:522px;height:194px"></div>
<div class="fo" style="top:635px;height:80px"></div>
<div class="lg" style="top:508px;width:87px;height:28px"></div>
<div class="t lt" style="left:280px;top:514px">Indizes</div>
<svg width="15" height="15" style="left:330px;top:516px"><use href="#help"/></svg>
<div class="no" style="top:570px"></div>
<svg class="i" style="left:284px;top:581px"><use href="#warn"/></svg>
<div class="t nt" style="top:581px">Kein Index definiert!</div>
<div class="t" style="left:269px;top:669px;color:#222">Index über</div>
<div class="in" style="left:340px;top:662px;width:58px;height:26px"></div>
<div class="t" style="left:344px;top:669px">1</div>
<div class="sp" style="left:379px;top:663px"><i></i></div>
<div class="t" style="left:409px;top:669px;color:#222">Spalten anlegen</div>
<div class="btn" style="left:516px;top:663px;width:33px;height:25px">OK</div>

<!-- Partitionen -->
<div class="fs" style="top:743px;height:191px"></div>
<div class="fo" style="top:857px;height:76px"></div>
<div class="lg" style="top:729px;width:111px;height:28px"></div>
<div class="t lt" style="left:280px;top:735px">Partitionen</div>
<svg width="15" height="15" style="left:355px;top:737px"><use href="#help"/></svg>
<div class="no" style="top:791px"></div>
<svg class="i" style="left:284px;top:802px"><use href="#warn"/></svg>
<div class="t nt" style="top:802px">Keine Partitionierung definiert!</div>
<div class="btn" style="left:1714px;top:883px;width:146px;height:25px">Partitioniere Tabelle</div>

<!-- Information -->
<div class="fs" style="top:961px;height:83px"></div>
<div class="lg" style="top:947px;width:94px;height:27px"></div>
<div class="t lt" style="left:280px;top:954px">Information</div>
<div class="a" style="left:271px;top:1003px;width:207px;height:19px;background:#d3dce3"></div>
<div class="a" style="left:500px;top:1003px;width:231px;height:19px;background:#d3dce3"></div>
<div class="t" style="left:271px;top:1005px;width:207px;text-align:center;font-weight:bold;color:#000;font-size:13.200px">Speicherplatzverbrauch</div>
<div class="t" style="left:500px;top:1005px;width:231px;text-align:center;font-weight:bold;color:#000;font-size:13.200px">Datensatz-Statistiken</div>
<div class="a" style="left:271px;top:1023px;width:207px;height:21px;background:#fff"></div>
<div class="a" style="left:499px;top:1023px;width:233px;height:21px;background:#fff"></div>
<div class="t" style="left:403px;top:1024px;font:11px/16px 'Liberation Mono',monospace">16,0</div>
<div class="t" style="left:438px;top:1024px">KiB</div>
<div class="t" style="left:503.600px;top:1025px;font-weight:bold;color:#000;font-size:13.200px">Format</div>
<div class="t" style="left:680px;top:1024px;font:11px/16px 'Liberation Mono',monospace">Compact</div>

<!-- Konsole -->
<div class="a" style="left:241px;top:1019px;width:76px;height:18px;background:#d0d0d0;border:1px solid #aaa;border-bottom:0;border-radius:0 4px 0 0;box-sizing:border-box"></div>
<svg width="12" height="12" style="left:249px;top:1023px"><defs><linearGradient id="kg" x1="0" y1="0" x2="1" y2="1"><stop offset="0" stop-color="#000"/><stop offset="1" stop-color="#888"/></linearGradient></defs><rect x=".5" y=".5" width="11" height="11" fill="url(#kg)" stroke="#ddd"/></svg>
<div class="t" style="left:267px;top:1022px;color:#444">Konsole</div>

<!-- Status bar -->
<div class="a" style="left:0;top:1037px;width:1901px;height:7px;background:#222;overflow:hidden">
<div class="t" style="left:11px;top:-3px;color:#555;font-size:12px">B4J-Bridge: Getrennt</div>
<div class="t" style="left:139px;top:-3px;color:#555;font-size:12px">2/9/2018 7:56:21 PM</div>
<div class="t" style="left:255px;top:-3px;color:#555;font-size:12px">Datei gespeichert</div>
<div class="t" style="left:1822px;top:1px;color:#fff;font-size:12px">20:19</div>
</div>
</div></body></html>
